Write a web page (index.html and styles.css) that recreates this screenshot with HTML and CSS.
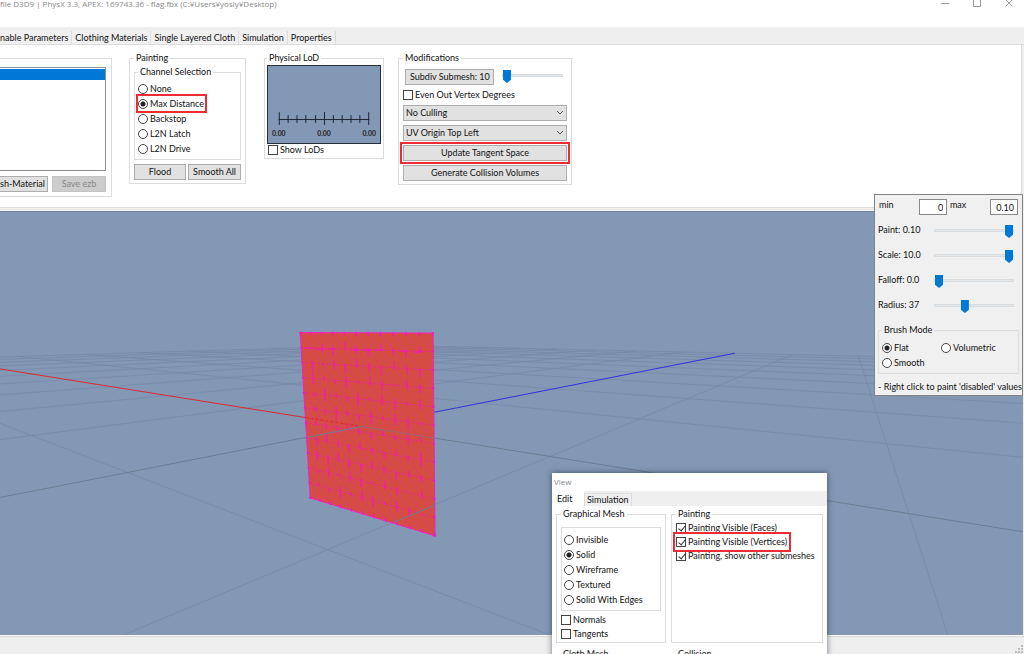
FILE: index.html
```
<!DOCTYPE html>
<html lang="en">
<head>
    <meta charset="UTF-8">
    <meta name="viewport" content="width=device-width, initial-scale=1.0">
    <title>Clothing Tool</title>
    <link rel="stylesheet" href="styles.css">
</head>
<body>
    <div class="app">
        <header class="titlebar">
            <span class="title">file D3D9 | PhysX 3.3, APEX: 169743.36 - flag.fbx (C:¥Users¥yosiy¥Desktop)</span>
            <div class="window-buttons">
                <button type="button" aria-label="Minimize"><svg width="10" height="10" viewBox="0 0 10 10"><path d="M1 5.5h8"/></svg></button>
                <button type="button" aria-label="Maximize"><svg width="10" height="10" viewBox="0 0 10 10"><path d="M1.500 1.500h7v7h-7z"/></svg></button>
                <button type="button" aria-label="Close"><svg width="10" height="10" viewBox="0 0 10 10"><path d="M1.500 1.500l7 7M8.500 1.500l-7 7"/></svg></button>
            </div>
        </header>

        <nav class="tabs">
            <button type="button" class="tab tab-cut">nable Parameters</button>
            <button type="button" class="tab">Clothing Materials</button>
            <button type="button" class="tab">Single Layered Cloth</button>
            <button type="button" class="tab">Simulation</button>
            <button type="button" class="tab">Properties</button>
        </nav>

        <section class="toolbar">
            <div class="group mesh-group">
                <div class="mesh-list"><div class="mesh-selected"></div></div>
                <div class="button-row">
                    <button type="button" class="btn btn-cut">sh-Material</button>
                    <button type="button" class="btn btn-save" disabled>Save ezb</button>
                </div>
            </div>

            <fieldset class="group paint-group">
                <legend>Painting</legend>
                <fieldset class="group channel-group">
                    <legend>Channel Selection</legend>
                    <label class="option"><input type="radio" name="channel">None</label>
                    <label class="option highlight"><input type="radio" name="channel" checked>Max Distance</label>
                    <label class="option"><input type="radio" name="channel">Backstop</label>
                    <label class="option"><input type="radio" name="channel">L2N Latch</label>
                    <label class="option"><input type="radio" name="channel">L2N Drive</label>
                </fieldset>
                <div class="button-row">
                    <button type="button" class="btn">Flood</button>
                    <button type="button" class="btn">Smooth All</button>
                </div>
            </fieldset>

            <fieldset class="group lod-group">
                <legend>Physical LoD</legend>
                <svg class="lod-view" viewBox="0 0 114 78">
                    <path d="M11 54.5h92M11.500 47v13M57.500 47v13M102.500 47v13M20.500 50v8M29.500 50v8M38.500 50v8M48.500 50v8M66.500 50v8M75.500 50v8M84.500 50v8M93.500 50v8"/>
                    <text x="11" y="71">0.00</text>
                    <text x="57" y="71">0.00</text>
                    <text x="103" y="71">0.00</text>
                </svg>
                <label class="check"><input type="checkbox">Show LoDs</label>
            </fieldset>

            <fieldset class="group mod-group">
                <legend>Modifications</legend>
                <div class="subdiv-row">
                    <button type="button" class="btn">Subdiv Submesh: 10</button>
                    <input type="range" value="0" aria-label="Subdivision">
                </div>
                <label class="check"><input type="checkbox">Even Out Vertex Degrees</label>
                <select aria-label="Culling"><option>No Culling</option></select>
                <select aria-label="UV origin"><option>UV Origin Top Left</option></select>
                <button type="button" class="btn highlight">Update Tangent Space</button>
                <button type="button" class="btn">Generate Collision Volumes</button>
            </fieldset>
        </section>

        <main class="viewport">
            <svg id="scene" viewBox="0 211 1024 424" preserveAspectRatio="xMidYMid slice"></svg>
        </main>

        <footer class="statusbar">
            <svg width="10" height="10" viewBox="0 0 10 10"><path d="M7 1h2v2h-2zM4 4h2v2h-2zM7 4h2v2h-2zM1 7h2v2h-2zM4 7h2v2h-2zM7 7h2v2h-2z"/></svg>
        </footer>

        <!-- Brush settings -->
        <aside class="brush-panel">
            <div class="range-row">
                <label for="brushMin">min</label>
                <input type="text" id="brushMin" value="0">
                <label for="brushMax">max</label>
                <input type="text" id="brushMax" value="0.10">
            </div>
            <div class="slider-row"><label for="paint">Paint: 0.10</label><input type="range" id="paint" value="100"></div>
            <div class="slider-row"><label for="scale">Scale: 10.0</label><input type="range" id="scale" value="100"></div>
            <div class="slider-row"><label for="falloff">Falloff: 0.0</label><input type="range" id="falloff" value="0"></div>
            <div class="slider-row"><label for="radius">Radius: 37</label><input type="range" id="radius" value="37"></div>
            <fieldset class="group mode-group">
                <legend>Brush Mode</legend>
                <label class="option"><input type="radio" name="mode" checked>Flat</label>
                <label class="option"><input type="radio" name="mode">Volumetric</label>
                <label class="option"><input type="radio" name="mode">Smooth</label>
            </fieldset>
            <p>- Right click to paint 'disabled' values</p>
        </aside>

        <!-- View window -->
        <section class="view-window">
            <div class="view-title">View</div>
            <div class="view-tabs">
                <button type="button" class="view-tab active">Edit</button>
                <button type="button" class="view-tab">Simulation</button>
            </div>
            <div class="view-body">
                <fieldset class="group">
                    <legend>Graphical Mesh</legend>
                    <div class="group render-group">
                        <label class="option"><input type="radio" name="render">Invisible</label>
                        <label class="option"><input type="radio" name="render" checked>Solid</label>
                        <label class="option"><input type="radio" name="render">Wireframe</label>
                        <label class="option"><input type="radio" name="render">Textured</label>
                        <label class="option"><input type="radio" name="render">Solid With Edges</label>
                    </div>
                    <label class="check"><input type="checkbox">Normals</label>
                    <label class="check"><input type="checkbox">Tangents</label>
                </fieldset>
                <fieldset class="group">
                    <legend>Painting</legend>
                    <label class="check"><input type="checkbox" checked>Painting Visible (Faces)</label>
                    <label class="check highlight"><input type="checkbox" checked>Painting Visible (Vertices)</label>
                    <label class="check"><input type="checkbox" checked>Painting, show other submeshes</label>
                </fieldset>
                <fieldset class="group"><legend>Cloth Mesh</legend></fieldset>
                <fieldset class="group"><legend>Collision</legend></fieldset>
            </div>
        </section>
    </div>

    <script src="scene.js"></script>
</body>
</html>
```

FILE: styles.css
```
* {
    box-sizing: border-box;
}

body {
    margin: 0;
    font-family: Lato, Roboto, sans-serif;
    font-size: 9px;
    line-height: 12px;
    color: #111;
    background-color: #efefef;
}

button, input, select {
    margin: 0;
    padding: 0;
    font: inherit;
    color: inherit;
}

.app {
    position: relative;
    height: 100vh;
    overflow: hidden;
    display: flex;
    flex-direction: column;
}

/* Title bar */
.titlebar {
    height: 27px;
    display: flex;
    justify-content: space-between;
    align-items: flex-start;
    background-color: #fff;
}

.title, .view-title {
    font-family: "Open Sans", "Noto Sans", sans-serif;
    font-size: 8px;
    color: #888;
}

.title {
    line-height: 8px;
}

.window-buttons {
    display: flex;
    gap: 22px;
    padding-right: 10px;
}

.window-buttons button {
    display: flex;
    height: 8px;
    width: 10px;
    align-items: flex-end;
    border: none;
    background: none;
}

.window-buttons path {
    fill: none;
    stroke: #999;
}

/* Tabs */
.tabs {
    height: 18px;
    display: flex;
    align-items: flex-end;
    border-bottom: 1px solid #ddd;
}

.tab {
    height: 13px;
    padding: 0 3px;
    border: none;
    border-right: 1px solid #dcdcdc;
    background-color: #f0f0f0;
}

.tab-cut {
    padding-left: 0;
}

/* Groups */
.group {
    min-width: 0;
    margin: 0;
    padding: 0 4px;
    border: 1px solid #dcdcdc;
}

.group legend {
    height: 12px;
    margin-left: 0;
    padding: 0 2px;
}

.toolbar {
    flex: none;
    height: 163px;
    margin-right: 2px;
    padding-top: 7px;
    display: flex;
    align-items: flex-start;
    gap: 14px;
    background-color: #fff;
    border-right: 1px solid #ddd;
    border-bottom: 1px solid #ddd;
}

.mesh-group {
    width: 112px;
    margin: 6px 3px 0 0;
    padding: 8px 5px 4px 0;
    border-left: none;
}

.mesh-list {
    height: 104px;
    padding-top: 1px;
    border: 1px solid #8a8f99;
    border-left: none;
}

.mesh-selected {
    height: 11px;
    background-color: #0078d7;
}

.button-row {
    display: flex;
    gap: 2px;
    margin-top: 4px;
}

.button-row .btn {
    flex: 1;
}

.mesh-group .button-row {
    gap: 4px;
    margin-top: 5px;
}

.btn {
    height: 16px;
    padding: 0 4px;
    line-height: 14px;
    white-space: nowrap;
    background-color: #e1e1e1;
    border: 1px solid #adadad;
}

.btn:disabled {
    color: #888;
    background-color: #ccc;
    border-color: #c4c4c4;
}

.mesh-group .btn-cut {
    flex: none;
    padding: 0 2px 0 0;
    border-left: none;
}

.option, .check {
    display: flex;
    align-items: center;
    gap: 2px;
    height: 15px;
    white-space: nowrap;
}

.check {
    height: 14px;
}

input[type="radio"], input[type="checkbox"] {
    appearance: none;
    flex: none;
    width: 10px;
    height: 10px;
    border: 1px solid #444;
    background-color: #fff;
}

input[type="radio"] {
    border-radius: 50%;
}

input[type="radio"]:checked {
    background-image: radial-gradient(circle, #222 2px, #fff 3px);
}

input[type="checkbox"]:checked::after {
    content: "";
    display: block;
    width: 3px;
    height: 6px;
    margin: 0 0 0 3px;
    border: solid #333;
    border-width: 0 1px 1px 0;
    transform: rotate(40deg);
}

.highlight {
    outline: 2px solid #ee2b33;
    outline-offset: 1px;
}

.paint-group {
    width: 117px;
    margin-right: 4px;
    padding: 2px 4px 3px;
}

.channel-group {
    padding: 3px 3px;
}

.channel-group .highlight {
    width: 67px;
    outline-offset: 0;
}

.lod-group {
    width: 120px;
    padding: 1px 2px;
}

.lod-view {
    display: block;
    width: 100%;
    background-color: #8398b5;
    border: 1px solid #26303c;
}

.lod-view path {
    stroke: #1c2530;
}

.lod-view text {
    font-size: 7px;
    font-weight: bold;
    text-anchor: middle;
    fill: #222;
}

.lod-group .check {
    height: 13px;
    padding-left: 1px;
}

.mod-group {
    width: 174px;
    padding: 5px 4px 3px;
}

.mod-group > * {
    display: block;
    width: 100%;
    margin-bottom: 4px;
}

.mod-group > legend {
    width: auto;
    margin-bottom: 0;
}

.mod-group > :last-child {
    margin-bottom: 0;
}

.mod-group .subdiv-row {
    display: flex;
    gap: 8px;
    padding: 0 4px 0 2px;
}

.mod-group .check {
    display: flex;
    height: 12px;
}

.subdiv-row .btn {
    flex: none;
    width: 89px;
}

select {
    appearance: none;
    height: 16px;
    padding: 0 2px;
    border: 1px solid #adadad;
    border-radius: 0;
    background: #e1e1e1 url("data:image/svg+xml,%3Csvg xmlns='http://www.w3.org/2000/svg' width='8' height='6'%3E%3Cpath d='M1 1l3 3 3-3' fill='none' stroke='%23555'/%3E%3C/svg%3E") no-repeat right 2px center;
}

/* Sliders */
input[type="range"] {
    appearance: none;
    min-width: 0;
    height: 13px;
    background: none;
}

input[type="range"]::-webkit-slider-runnable-track {
    height: 3px;
    background-color: #e4e8ea;
    border: 1px solid #d9dcde;
}

input[type="range"]::-webkit-slider-thumb {
    appearance: none;
    width: 8px;
    height: 13px;
    margin-top: -5px;
    background-color: #0078d7;
    clip-path: polygon(0 0, 100% 0, 100% 75%, 50% 100%, 0 75%);
}

.subdiv-row input {
    flex: 1;
}

/* Viewport */
.viewport {
    flex: 1;
    min-height: 0;
    margin: 3px 1px 0 0;
    background-color: #8398b5;
    border-top: 1px solid #7488a4;
}

.viewport svg {
    display: block;
    width: 100%;
    height: 100%;
}

.grid-line {
    stroke: #7789a9;
    opacity: 0.75;
}

.grid-axis {
    stroke: #6b7d93;
}

.axis-x {
    stroke: #e0282f;
}

.axis-z {
    stroke: #2e33dd;
}

.cloth {
    fill: #d54c43;
    stroke: #f41fc8;
}

.cloth-seam {
    fill: none;
    stroke: #f415c8;
}

.cloth-dash {
    fill: none;
    stroke: #ea22a8;
    stroke-dasharray: 2 2;
}

.cloth-fine {
    fill: none;
    stroke: #e52f9c;
    stroke-dasharray: 2 1;
    opacity: 0.7;
}

.statusbar {
    height: 19px;
    flex: none;
    display: flex;
    justify-content: flex-end;
    align-items: flex-end;
    border-top: 1px solid #fff;
    box-shadow: inset 0 1px #d9d9d9;
}

.statusbar path {
    fill: #bbb;
}

/* Brush panel */
.brush-panel {
    position: absolute;
    top: 194px;
    right: 1px;
    width: 149px;
    padding: 4px 3px 1px;
    background-color: #f0f0f0;
    border: 1px solid #828282;
}

.range-row {
    display: flex;
    justify-content: space-between;
    height: 19px;
    padding: 0 1px;
}

.range-row input {
    width: 28px;
    height: 16px;
    padding-right: 3px;
    text-align: right;
    border: 1px solid #888;
    background-color: #fff;
}

#brushMin {
    margin-left: 23px;
}

#brushMax {
    margin-left: 21px;
}

.slider-row {
    display: flex;
    justify-content: space-between;
    align-items: center;
    height: 25px;
    padding-right: 5px;
}

.slider-row label {
    padding-bottom: 2px;
}

.slider-row input {
    width: 80px;
}

.mode-group {
    display: grid;
    grid-template-columns: 59px 1fr;
    margin-top: 6px;
    padding: 4px 3px 3px;
}

.brush-panel p {
    margin: 7px 0 1px;
    white-space: nowrap;
}

/* View window */
.view-window {
    position: absolute;
    top: 473px;
    left: 552px;
    width: 275px;
    background-color: #fff;
    box-shadow: 0 0 6px rgba(20, 30, 50, 0.6);
}

.view-title {
    height: 18px;
    padding-left: 2px;
    line-height: 17px;
}

.view-tabs {
    display: flex;
    align-items: flex-end;
    height: 15px;
    padding-right: 1px;
    background-color: #efefef;
}

.view-tab {
    height: 13px;
    padding: 0 2px;
    border: 1px solid #dcdcdc;
    border-bottom: none;
    background-color: #f0f0f0;
    line-height: 12px;
}

.view-tab.active {
    width: 32px;
    height: 15px;
    border: none;
    background-color: #fff;
    text-align: left;
    padding-left: 5px;
}

.view-body {
    display: grid;
    grid-template-columns: 110px 1fr;
    gap: 5px;
    padding: 2px 4px;
}

.view-body > .group {
    padding: 1px 4px;
}

.render-group {
    margin: 6px 0 2px;
    padding: 4px 2px 3px;
}

.view-body .highlight {
    width: 112px;
}
```

FILE: scene.js
```
const svg = document.getElementById('scene');

function add(tag, className, attrs) {
    const el = document.createElementNS('http://www.w3.org/2000/svg', tag);
    el.setAttribute('class', className);
    for (const key in attrs) {
        el.setAttribute(key, attrs[key]);
    }
    svg.appendChild(el);
    return el;
}

// Perspective ground plane: origin and the two vanishing points
const origin = [362, 426];
const vanishX = [-241, 330];
const vanishZ = [851, 330];
const scaleX = 0.238;
const scaleZ = 0.324;
const size = 10;

function depth(x, z) {
    return 1 - scaleX * x - scaleZ * z;
}

function project(x, z) {
    const w = depth(x, z);
    return [0, 1].map(i => (origin[i] - scaleX * x * vanishX[i] - scaleZ * z * vanishZ[i]) / w);
}

function groundLine(from, to, className) {
    // keep the near end in front of the camera
    const w0 = depth(from[0], from[1]);
    const w1 = depth(to[0], to[1]);
    const near = 0.04;
    if (w0 < near) return;
    if (w1 < near) {
        const t = (w0 - near) / (w0 - w1);
        to = [from[0] + (to[0] - from[0]) * t, from[1] + (to[1] - from[1]) * t];
    }
    const a = project(from[0], from[1]);
    const b = project(to[0], to[1]);
    return add('line', className, { x1: a[0], y1: a[1], x2: b[0], y2: b[1] });
}

function drawGround() {
    for (let i = -size; i <= size; i++) {
        if (i === 0) continue;
        groundLine([i, -size], [i, size], 'grid-line');
        groundLine([-size, i], [size, i], 'grid-line');
    }
    groundLine([0, 0], [size, 0], 'grid-axis');
    groundLine([0, 0], [0, size], 'grid-axis');
    groundLine([-size, 0], [0, 0], 'axis-x');
    groundLine([0, -size], [0, 0], 'axis-z');
}

// Cloth mesh
const cells = 11;

function clothPoint(col, row) {
    const u = col / cells;
    const v = row / cells;
    const s = u * (0.86 + 0.14 * u);
    const left = [300.5 + 10 * v, 332 + 165.5 * v];
    const right = [433.5 + 2 * v, 332.5 + 203 * v];
    return [left[0] + (right[0] - left[0]) * s, left[1] + (right[1] - left[1]) * s];
}

function drawCloth() {
    const corners = [[0, 0], [cells, 0], [cells, cells], [0, cells]];
    add('polygon', 'cloth', { points: corners.map(c => clothPoint(c[0], c[1]).join()).join(' ') });

    let fine = '';
    let dash = '';
    let seam = '';
    for (let row = 0; row < cells; row++) {
        for (let col = 0; col < cells; col++) {
            const p = clothPoint(col, row);
            const q = clothPoint(col + 1, row + 1);
            fine += `M${p}L${q}`;
        }
    }
    for (let row = 1; row < cells; row++) {
        dash += `M${clothPoint(0, row)}L${clothPoint(cells, row)}`;
        for (let col = 1; col < cells; col++) {
            const p = clothPoint(col, row);
            const up = (col * 5 + row * 3) % 8;
            const down = (col * 3 + row * 7) % 9;
            const x = Math.floor(p[0]) + 0.5;
            seam += `M${x} ${Math.round(p[1] - up)}V${Math.round(p[1] + down)}`;
            if (row === 1 && col % 4 !== 0) {
                seam += `M${p[0] - 7} ${Math.round(p[1]) + 0.5}h9`;
            }
        }
    }
    add('path', 'cloth-fine', { d: fine });
    add('path', 'cloth-dash', { d: dash });
    add('path', 'cloth-seam', { d: seam });

    // vertices on the border
    let ticks = '';
    for (let i = 0; i <= cells; i++) {
        const [top, bottom, left, right] = [clothPoint(i, 0), clothPoint(i, cells), clothPoint(0, i), clothPoint(cells, i)];
        ticks += `M${top[0]} ${top[1] - 1}v4M${bottom[0]} ${bottom[1] - 3}v4`;
        ticks += `M${left[0] - 1} ${left[1]}h3M${right[0] - 2} ${right[1]}h3`;
    }
    add('path', 'cloth-seam', { d: ticks });

    // ground axes seen through the cloth
    add('path', 'axis-x', { d: 'M306 417L362 426', 'stroke-dasharray': '3 2' });
    add('path', 'grid-axis', { d: 'M307 437L362 426' });
    add('path', 'grid-axis', { d: 'M362 426L435 437.6', 'stroke-dasharray': '3 2' });
    add('path', 'grid-axis', { d: 'M394 522L435 505' });
}

drawGround();
drawCloth();
```
